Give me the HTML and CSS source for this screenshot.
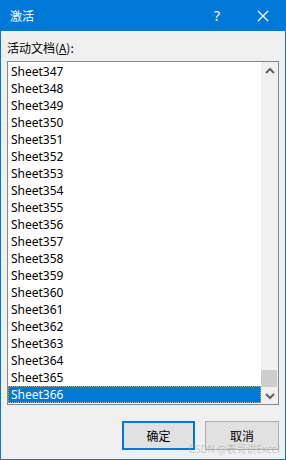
FILE: index.html
```html
<!DOCTYPE html>
<html lang="zh-CN">
<head>
  <meta charset="UTF-8">
  <title>激活</title>
  <link rel="stylesheet" href="styles.css">
</head>
<body>
  <div class="window">
    <div class="titlebar">
      <span class="title">激活</span>
      <span class="help">?</span>
      <span class="close">
        <svg width="12" height="12" viewBox="0 0 12 12"><path d="M1 1L11 11M11 1L1 11" stroke="#fff" stroke-width="1.2"/></svg>
      </span>
    </div>

    <div class="content">
      <div class="label">活动文档(<u>A</u>):</div>

      <div class="listbox">
        <ul id="items" class="items"></ul>
        <div class="scrollbar">
          <div class="arrow">
            <svg width="10" height="8" viewBox="0 0 10 8"><path d="M1 6L5 2L9 6" fill="none" stroke="#606060" stroke-width="2"/></svg>
          </div>
          <div class="track">
            <div class="thumb"></div>
          </div>
          <div class="arrow">
            <svg width="10" height="8" viewBox="0 0 10 8"><path d="M1 2L5 6L9 2" fill="none" stroke="#606060" stroke-width="2"/></svg>
          </div>
        </div>
      </div>

      <div class="buttons">
        <button class="btn default">确定</button>
        <button class="btn">取消</button>
      </div>
    </div>

    <div class="watermark">CSDN @表哥讲Excel</div>
  </div>

  <script>
    // list of sheets shown in the box
    const list = document.getElementById("items");
    for (let n = 347; n <= 366; n++) {
      const li = document.createElement("li");
      li.className = n === 366 ? "item selected" : "item";
      li.textContent = "Sheet" + n;
      list.appendChild(li);
    }
  </script>
</body>
</html>
```

FILE: styles.css
```css
body {
  margin: 0;
  font-family: "Noto Sans", "Noto Sans CJK SC", sans-serif;
  font-size: 12px;
  color: #000;
}

.window {
  position: relative;
  width: 284px;
  height: 459px;
  border: 1px solid #0078d7;
  border-top: none;
  background: #f0f0f0;
}

.titlebar {
  height: 31px;
  background: #0078d7;
  color: #fff;
  display: flex;
  align-items: center;
  padding-left: 9px;
}

.title {
  flex: 1;
  font-family: "Noto Sans CJK SC", sans-serif;
  font-size: 12px;
}

.help {
  width: 14px;
  font-size: 14px;
  margin-right: 29px;
}

.close {
  display: flex;
  margin-right: 16px;
}

.content {
  padding: 9px 6px 0 6px;
}

.label {
  font-family: "Noto Sans CJK SC", sans-serif;
  line-height: 16px;
  height: 16px;
  margin-bottom: 5px;
}

.label u {
  text-underline-offset: 1px;
}

.listbox {
  display: flex;
  height: 342px;
  border: 1px solid #828790;
  background: #fff;
}

.items {
  flex: 1;
  list-style: none;
  margin: 0;
  padding: 1px 0 0;
}

.item {
  height: 17px;
  line-height: 17px;
  padding-left: 3px;
}

.item.selected {
  background: #0078d7;
  color: #fff;
  outline: 1px dotted #f0a030;
  outline-offset: -1px;
}

.scrollbar {
  width: 17px;
  background: #f0f0f0;
  display: flex;
  flex-direction: column;
}

.arrow {
  height: 17px;
  display: flex;
  align-items: center;
  justify-content: center;
}

.track {
  flex: 1;
  display: flex;
  flex-direction: column;
  justify-content: flex-end;
  padding: 0 1px 0 0;
}

.thumb {
  height: 17px;
  background: #cdcdcd;
}

.buttons {
  display: flex;
  justify-content: flex-end;
  gap: 10px;
  margin-top: 16px;
}

.btn {
  width: 74px;
  height: 29px;
  font-family: "Noto Sans CJK SC", sans-serif;
  font-size: 12px;
  color: #000;
  background: #e1e1e1;
  border: 1px solid #adadad;
  padding: 0;
}

.btn.default {
  width: 73px;
  border: 2px solid #0078d7;
}

.watermark {
  position: absolute;
  right: 5px;
  bottom: 4px;
  font-family: "Noto Sans CJK SC", sans-serif;
  font-size: 10px;
  line-height: 12px;
  color: rgba(170, 170, 170, 0.6);
}
```
